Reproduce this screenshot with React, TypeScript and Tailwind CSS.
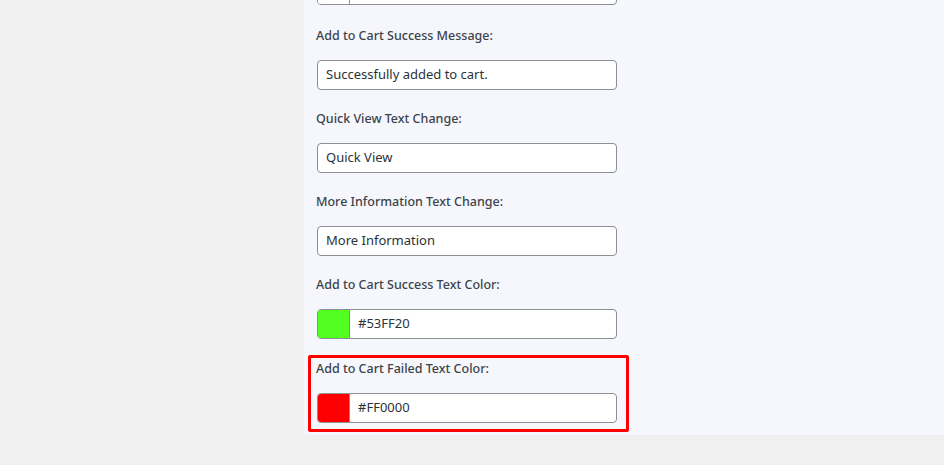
import React from "react";

type FieldProps = {
  label: string;
  value: string;
  swatch?: string;
  highlight?: boolean;
};

const Field = ({ label, value, swatch, highlight }: FieldProps) => (
  <div
    className={
      highlight
        ? "-ml-[9px] -mt-[2px] w-[321px] border-[3px] border-[#ff0000] rounded-[2px] pl-[6px] pb-[6px]"
        : ""
    }
  >
    <label className="-ml-px block h-[20px] text-[12.5px] leading-[22px] font-medium text-[#3c434a]">
      {label}
    </label>
    <div className="mt-[15px] flex h-[30px] w-[300px] overflow-hidden rounded-[4px] border border-[#8c8f94] bg-white">
      {swatch && (
        <span
          className="h-full w-[32px] shrink-0 border-r border-[#8c8f94]"
          style={{ backgroundColor: swatch }}
        />
      )}
      <span className="flex items-center pl-[8px] text-[13px] text-[#2c3338]">
        {value}
      </span>
    </div>
  </div>
);

export default function App() {
  return (
    <div
      className="flex h-[465px] w-[944px] overflow-hidden bg-[#f0f0f1]"
      style={{ fontFamily: '"Noto Sans", "Open Sans", sans-serif' }}
    >
      <div className="ml-[304px] h-[435px] flex-1 rounded-bl-[4px] bg-[#f6f7fc] pl-[13px]">
        <div className="-mt-[25px] flex h-[30px] w-[300px] overflow-hidden rounded-[4px] border border-[#8c8f94] bg-white">
          <span className="h-full w-[32px] border-r border-[#8c8f94] bg-white" />
        </div>
        <div className="mt-[20px] flex flex-col gap-[18px]">
          <Field label="Add to Cart Success Message:" value="Successfully added to cart." />
          <Field label="Quick View Text Change:" value="Quick View" />
          <Field label="More Information Text Change:" value="More Information" />
          <Field label="Add to Cart Success Text Color:" value="#53FF20" swatch="#53ff20" />
          <Field label="Add to Cart Failed Text Color:" value="#FF0000" swatch="#ff0000" highlight />
        </div>
      </div>
    </div>
  );
}
